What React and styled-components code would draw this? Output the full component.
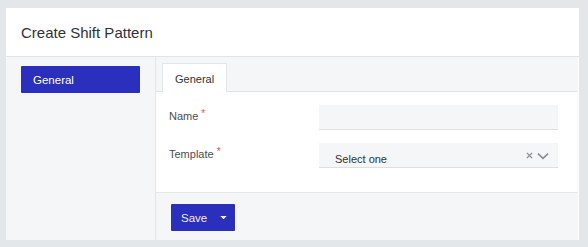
import styled, { createGlobalStyle } from 'styled-components'

const Global = createGlobalStyle`
	body {
		margin: 0;
		background: #e4e7ea;
		font-family: "Liberation Sans", Arial, sans-serif;
		color: #333;
	}
`;

const Page = styled.div`
	padding: 8px 9px 7px 6px;
`;

const Card = styled.div`
	background: #fff;
	width: 573px;
	height: 232px;
	display: flex;
	flex-direction: column;
`;

const Header = styled.div`
	flex-shrink: 0;
	height: 48px;
	border-bottom: 1px solid #dfe4ea;
	display: flex;
	align-items: center;
	padding-left: 15px;
	font-size: 15px;
	color: #2f3237;
`;

const Body = styled.div`
	flex: 1;
	min-height: 0;
	display: grid;
	grid-template-columns: 150px 1fr;
	background: #f5f6f8;
	margin-right: 1px;
`;

const Sidebar = styled.div`
	border-right: 1px solid #e4e7ea;
	padding: 9px 15px;
`;

const SideButton = styled.div`
	height: 27px;
	background: #2a2fbe;
	color: #fff;
	font-size: 11.5px;
	display: flex;
	align-items: center;
	padding-left: 12px;
	border-radius: 1px;
`;

const Main = styled.div`
	display: flex;
	flex-direction: column;
	margin-right: 1px;
`;

const TabBar = styled.div`
	flex-shrink: 0;
	height: 35px;
	box-sizing: border-box;
	padding: 6px 0 0 6px;
	border-bottom: 1px solid #e1e5ea;
	display: flex;
`;

const Tab = styled.div`
	background: #fff;
	border: 1px solid #e1e5ea;
	border-bottom: none;
	height: 30px;
	box-sizing: border-box;
	padding: 0 12px;
	display: flex;
	align-items: center;
	font-size: 11px;
	color: #333;
	margin-bottom: -1px;
`;

const Content = styled.div`
	flex-shrink: 0;
	background: #fff;
	padding: 13px 19px 24px 13px;
	display: flex;
	flex-direction: column;
	gap: 13px;
	border-bottom: 1px solid #e4e7ea;
`;

const Row = styled.div`
	display: grid;
	grid-template-columns: 150px 1fr;
	align-items: start;
`;

const Label = styled.div`
	font-size: 11px;
	color: #4a4d52;
	padding-top: 3px;
`;

const Req = styled.span`
	color: #ef4a5b;
	margin-left: 3px;
	font-size: 10px;
	vertical-align: 3px;
`;

const Input = styled.div`
	height: 25px;
	background: #f5f6f8;
	border-bottom: 1px solid #dcdfe3;
	box-sizing: border-box;
	display: flex;
	align-items: flex-end;
	padding: 0 9px 2px 16px;
	font-size: 11px;
	color: #333;
`;

const SelectText = styled.span`
	flex: 1;
`;

const Icons = styled.div`
	display: flex;
	align-items: center;
	gap: 4px;
	align-self: center;
	margin-top: 3px;
`;

const Footer = styled.div`
	flex: 1;
	padding: 11px 15px 0;
`;

const SaveButton = styled.div`
	width: 64px;
	height: 27px;
	background: #2a2fbe;
	color: #eef;
	border-radius: 1px;
	display: flex;
	align-items: center;
	justify-content: space-between;
	padding: 0 8px 0 10px;
	box-sizing: border-box;
	font-size: 11.5px;
`;

function App() {
	return (
		<>
			<Global />
			<Page>
				<Card>
					<Header>Create Shift Pattern</Header>
					<Body>
						<Sidebar>
							<SideButton>General</SideButton>
						</Sidebar>
						<Main>
							<TabBar>
								<Tab>General</Tab>
							</TabBar>
							<Content>
								<Row>
									<Label>Name<Req>*</Req></Label>
									<Input />
								</Row>
								<Row>
									<Label>Template<Req>*</Req></Label>
									<Input>
										<SelectText>Select one</SelectText>
										<Icons>
											<svg width="7" height="7" viewBox="0 0 8 8">
												<path d="M1 1l6 6M7 1L1 7" stroke="#8a8d92" strokeWidth="1.6" />
											</svg>
											<svg width="12" height="8" viewBox="0 0 13 8">
												<path d="M1 1.5l5.5 5 5.5-5" fill="none" stroke="#8a8d92" strokeWidth="1.8" />
											</svg>
										</Icons>
									</Input>
								</Row>
							</Content>
							<Footer>
								<SaveButton>
									Save
									<svg width="7" height="4" viewBox="0 0 8 5">
										<path d="M0 0h8L4 4z" fill="#fff" />
									</svg>
								</SaveButton>
							</Footer>
						</Main>
					</Body>
				</Card>
			</Page>
		</>
	)
}

export default App
